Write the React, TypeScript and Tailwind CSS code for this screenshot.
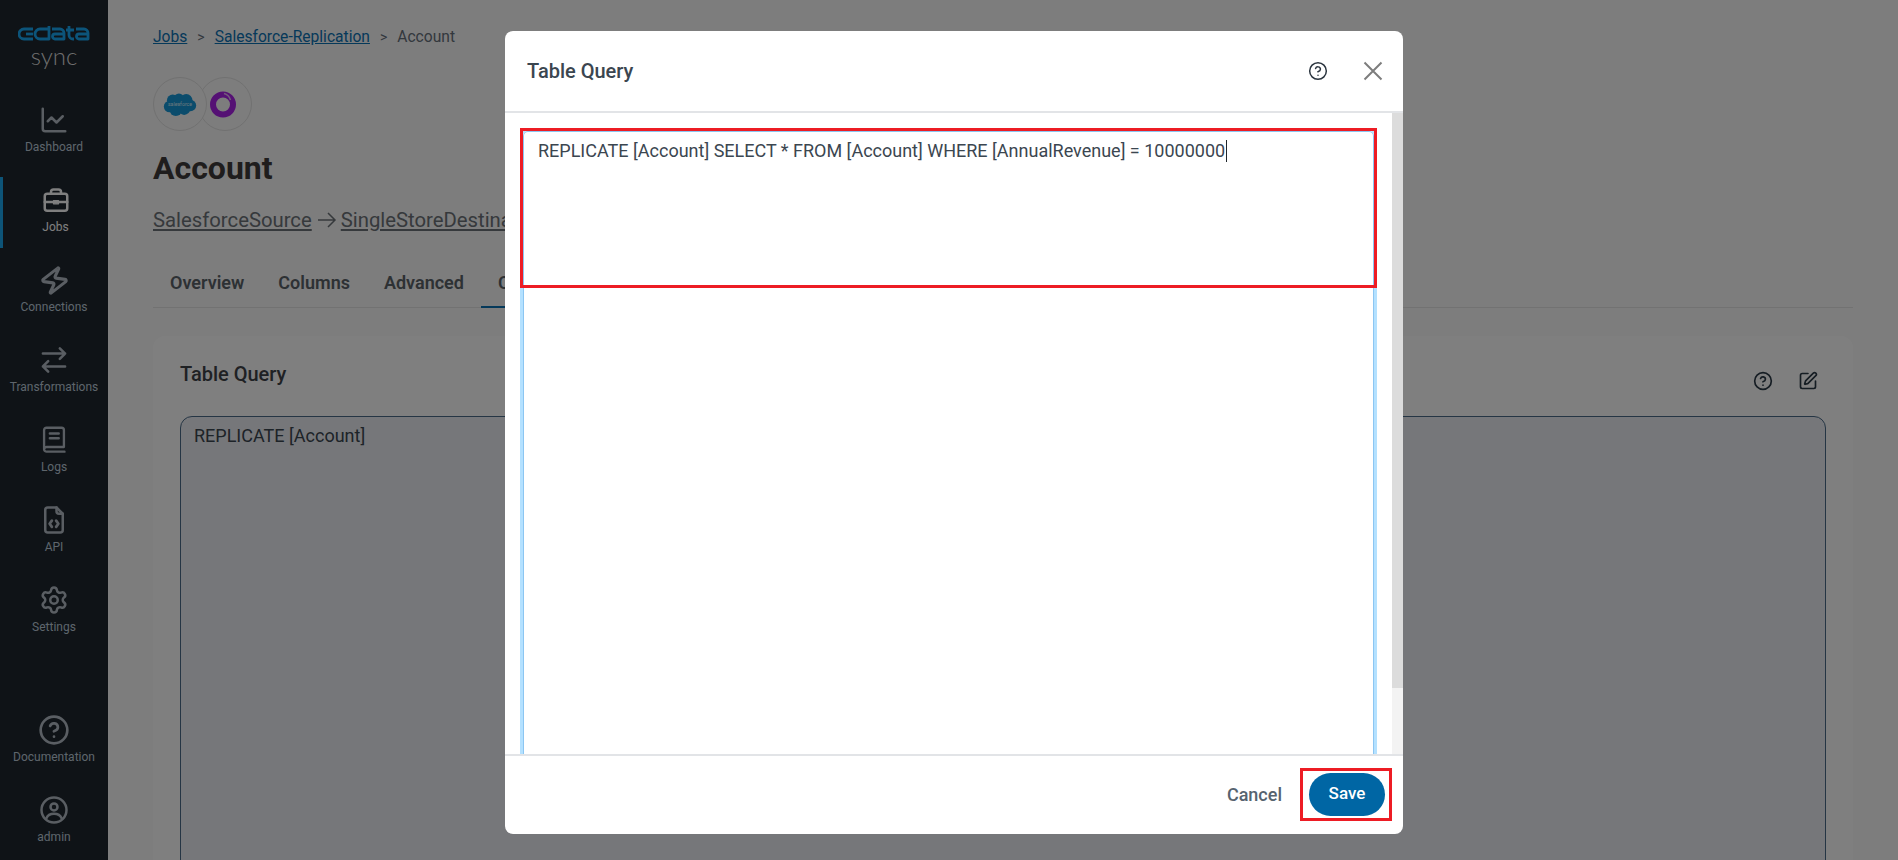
import React from "react";
import { ChartLine, Zap, Settings, CircleHelp, SquarePen } from "lucide-react";

const S = { fill: "none", stroke: "currentColor", strokeWidth: 2, strokeLinecap: "round" as const, strokeLinejoin: "round" as const };

function Jobs() {
  return (
    <svg width="30" height="30" viewBox="0 0 24 24" className="ml-[3px]" {...S}>
      <rect x="3" y="7" width="18" height="13.5" rx="2" />
      <path d="M8 7V5.500A2 2 0 0 1 10 3.500h4a2 2 0 0 1 2 2V7" />
      <path d="M3 13.500h6.500M14.500 13.500H21" />
      <path d="M10 12.500h4v2.500h-4z" fill="currentColor" strokeWidth="1" />
    </svg>
  );
}
function Arrows() {
  return (
    <svg width="28" height="28" viewBox="0 0 24 24" {...S} strokeWidth="2.200">
      <path d="M2.500 6.500h19M17 2l4.500 4.500L17 11M21.500 17.500h-19M7 13l-4.500 4.500L7 22" />
    </svg>
  );
}
function Book() {
  return (
    <svg width="28" height="28" viewBox="0 0 24 24" {...S}>
      <path d="M3.500 20V3.500a2 2 0 0 1 2-2h13a2 2 0 0 1 2 2V18H6a2.200 2.200 0 0 0-2.500 2 2.200 2.200 0 0 0 2.500 2h15" />
      <path d="M8.500 6.500h7.500M8.500 10.500h7.500" strokeWidth="2.200" />
    </svg>
  );
}
function ApiFile() {
  return (
    <svg width="30" height="30" viewBox="0 0 24 24" {...S}>
      <path d="M14 2H7a2 2 0 0 0-2 2v16a2 2 0 0 0 2 2h10a2 2 0 0 0 2-2V7z" />
      <path d="M14 2v3a2 2 0 0 0 2 2h3" />
      <path d="M10.300 12.500 8.500 15l1.800 2.500M13.700 12.500l1.800 2.500-1.800 2.500" strokeWidth="2.200" />
    </svg>
  );
}
function Admin() {
  return (
    <svg width="30" height="30" viewBox="0 0 24 24" {...S}>
      <circle cx="12" cy="12" r="10" />
      <circle cx="12" cy="9.500" r="2.800" />
      <path d="M6 18.500c1-2.800 3.500-3.500 6-3.500s5 .7 6 3.500" />
    </svg>
  );
}

function Logo() {
  return (
    <svg width="72" height="16" viewBox="0 0 72 16" fill="none" stroke="#18a8f4" strokeWidth="2.800" strokeLinejoin="round">
      <path d="M15 3H6a5 5 0 0 0 0 10h9" />
      <path d="M15 8H8" />
      <path d="M31 0v13H22a5 5 0 0 1 0-10h8" />
      <path d="M34 3h8a4 4 0 0 1 4 4v6h-9a2.500 2.500 0 0 1 0-5h8" />
      <path d="M51 0v9a4 4 0 0 0 4 4h1M48 4h8" />
      <path d="M58 3h8a4 4 0 0 1 4 4v6h-9a2.500 2.500 0 0 1 0-5h8" />
    </svg>
  );
}

function Cloud() {
  return (
    <svg width="34" height="25" viewBox="0 0 32 24">
      <g fill="#1798d8">
        <circle cx="9" cy="8" r="5.500" />
        <circle cx="15" cy="6.500" r="5" />
        <circle cx="22" cy="8" r="6" />
        <circle cx="26" cy="13" r="5.500" />
        <circle cx="6" cy="14" r="5.500" />
        <circle cx="12" cy="17" r="6" />
        <circle cx="20" cy="16" r="6" />
      </g>
      <text x="16" y="13.500" textAnchor="middle" fontSize="5" fill="#d8eefa" fontFamily="Roboto, sans-serif">salesforce</text>
    </svg>
  );
}
function Ring() {
  return (
    <svg width="28" height="28" viewBox="0 0 28 28" fill="none">
      <circle cx="14" cy="14.500" r="10" stroke="#ab22e8" strokeWidth="6" />
      <path d="M15 3.500c3 .8 5.500 3 6.500 6.500" stroke="#e6b8f5" strokeWidth="1.500" />
    </svg>
  );
}

const nav = [
  { label: "Dashboard", icon: <ChartLine size={30} strokeWidth={2} /> },
  { label: "Jobs", icon: <Jobs />, active: true },
  { label: "Connections", icon: <Zap size={31} strokeWidth={2.400} className="rotate-[8deg]" /> },
  { label: "Transformations", icon: <Arrows /> },
  { label: "Logs", icon: <Book /> },
  { label: "API", icon: <ApiFile /> },
  { label: "Settings", icon: <Settings size={30} strokeWidth={2} /> },
];

function Item({ label, icon, active }: { label: string; icon: React.ReactNode; active?: boolean }) {
  return (
    <div className={`flex h-[71px] flex-col items-center pt-[9px] border-l-[3px] pr-[3px] ${active ? "border-[#1aa8f0] text-white" : "border-transparent text-[#b4bdc6]"}`}>
      <div className="flex h-[28px] items-center justify-center">{icon}</div>
      <div className={`mt-[5px] whitespace-nowrap text-[12px] leading-4 ${active ? "text-white ml-[3px]" : "text-[#bccbd9]"}`}>{label}</div>
    </div>
  );
}

export default function App() {
  return (
    <div className="relative flex h-[860px] w-[1898px] overflow-hidden bg-[#fafafa] font-['Roboto',sans-serif]">
      <aside className="flex w-[108px] shrink-0 flex-col bg-[#1e262e]">
        <div className="flex h-[97px] flex-col items-center pt-[26px]">
          <Logo />
          <div className="-mt-[1px] text-[24px] font-light leading-[30px] text-[#dcdcdc] font-['Lato',sans-serif]">sync</div>
        </div>
        <div className="flex flex-col gap-[9px]">
          {nav.map((n) => (
            <Item key={n.label} {...n} />
          ))}
        </div>
        <div className="mt-auto flex flex-col gap-[9px] pb-[2px]">
          <Item label="Documentation" icon={<CircleHelp size={32} strokeWidth={2} />} />
          <Item label="admin" icon={<Admin />} />
        </div>
      </aside>

      <main className="flex min-w-0 flex-1 flex-col px-[45px] pt-[27px]">
        <div className="flex items-center text-[15.600px] leading-5 text-[#66707a]">
          <a className="text-[#0b72b4] underline">Jobs</a>
          <span className="mx-[10px] text-[14px]">&gt;</span>
          <a className="text-[#0b72b4] underline">Salesforce-Replication</a>
          <span className="mx-[10px] text-[14px]">&gt;</span>
          <span>Account</span>
        </div>
        <div className="mt-[30px] flex">
          <div className="relative z-10 flex h-[54px] w-[54px] items-center justify-center rounded-full border border-[#e2e2e2] bg-[#fafafa]">
            <Cloud />
          </div>
          <div className="-ml-[9px] flex h-[54px] w-[54px] items-center justify-center rounded-full border border-[#e2e2e2] pr-[5px]">
            <Ring />
          </div>
        </div>
        <h1 className="mt-[17px] text-[32px] font-bold leading-10 text-[#3e3a3a]">Account</h1>
        <div className="mt-[18px] flex items-center text-[20.300px] leading-7 text-[#6d7379]">
          <span className="underline">SalesforceSource</span>
          <svg width="20" height="18" viewBox="0 0 20 18" fill="none" stroke="currentColor" strokeWidth="1.500" className="ml-[5px] mr-[4px]">
            <path d="M1 9h17M11 2l7 7-7 7" />
          </svg>
          <span className="underline">SingleStoreDestination</span>
        </div>
        <div className="mt-[24px] flex h-[50px] items-start gap-[34px] border-b border-[#e4e4e4] pl-[17px] pt-[13px] text-[18px] font-semibold leading-6 text-[#5b6269]">
          <span>Overview</span>
          <span>Columns</span>
          <span>Advanced</span>
          <span className="-mt-[13px] h-[50px] border-b-2 border-[#0b72b4] px-[17px] pt-[13px] -ml-[17px]">Custom Query</span>
        </div>
        <section className="mt-[28px] h-[600px] rounded-t-xl bg-white px-[27px] pt-[24px]">
          <div className="flex h-[28px] items-start justify-between">
            <h2 className="text-[20px] font-medium leading-7 text-[#3e4349]">Table Query</h2>
            <div className="mr-[8px] mt-[11px] flex items-center gap-[25px] text-[#2b3a47]">
              <CircleHelp size={20} strokeWidth={2} />
              <SquarePen size={20} strokeWidth={2} />
            </div>
          </div>
          <div className="mt-[28px] h-[500px] rounded-t-xl border border-[#4a6a88] bg-[#edeff4] px-[13px] py-[7px] text-[18px] leading-6 text-[#3b4650]">
            REPLICATE [Account]
          </div>
        </section>
      </main>

      <div className="absolute inset-0 z-50 bg-black/50 pl-[505px] pt-[31px]">
        <div className="flex h-[803px] w-[898px] flex-col overflow-hidden rounded-lg bg-white">
          <header className="flex h-[82px] shrink-0 items-center justify-between border-b-2 border-[#e2e4e7] pl-[22px] pr-[20px]">
            <h2 className="text-[20px] font-medium text-[#3b4650]">Table Query</h2>
            <div className="flex items-center gap-[35px]">
              <CircleHelp size={20} strokeWidth={1.800} className="text-[#2c3640]" />
              <svg width="20" height="20" viewBox="0 0 20 20" stroke="#7d7d7d" strokeWidth="2" fill="none">
                <path d="M1.500 1.500l17 17M18.500 1.500l-17 17" />
              </svg>
            </div>
          </header>
          <div className="flex min-h-0 flex-1 overflow-hidden">
            <div className="min-w-0 flex-1 overflow-hidden pl-[15px] pr-[15px] pt-[15px]">
              <div className="relative h-[700px] rounded-t-lg border-[3px] border-[#b4e1ff] px-[15px] pt-[8px] text-[18px] leading-6 text-[#3b4650] shadow-[inset_0_0_0_1px_#8cc6f2]">
                <span>REPLICATE [Account] SELECT * FROM [Account] WHERE [AnnualRevenue] = 10000000</span>
                <span className="ml-[1px] inline-block h-[22px] w-px bg-[#20262c] align-[-5px]" />
                <div className="absolute -left-[3px] -right-[3px] -top-[3px] h-[160px] border-[3px] border-[#ed1c24]" />
              </div>
            </div>
            <div className="flex w-[11px] shrink-0 flex-col bg-[#f3f3f3]">
              <div className="h-[575px] bg-[#dcdcdc]" />
            </div>
          </div>
          <footer className="flex h-[80px] shrink-0 items-center justify-end border-t-2 border-[#e2e4e7] pb-[2px] pr-[11px]">
            <button className="mr-[18px] text-[18px] font-medium text-[#56636f]">Cancel</button>
            <div className="flex h-[53px] w-[92px] items-center justify-center border-[3px] border-[#ed1c24] pl-[2px]">
              <button className="h-[43px] w-[76px] rounded-full bg-[#0066a4] text-[17px] font-medium text-white">Save</button>
            </div>
          </footer>
        </div>
      </div>
    </div>
  );
}
